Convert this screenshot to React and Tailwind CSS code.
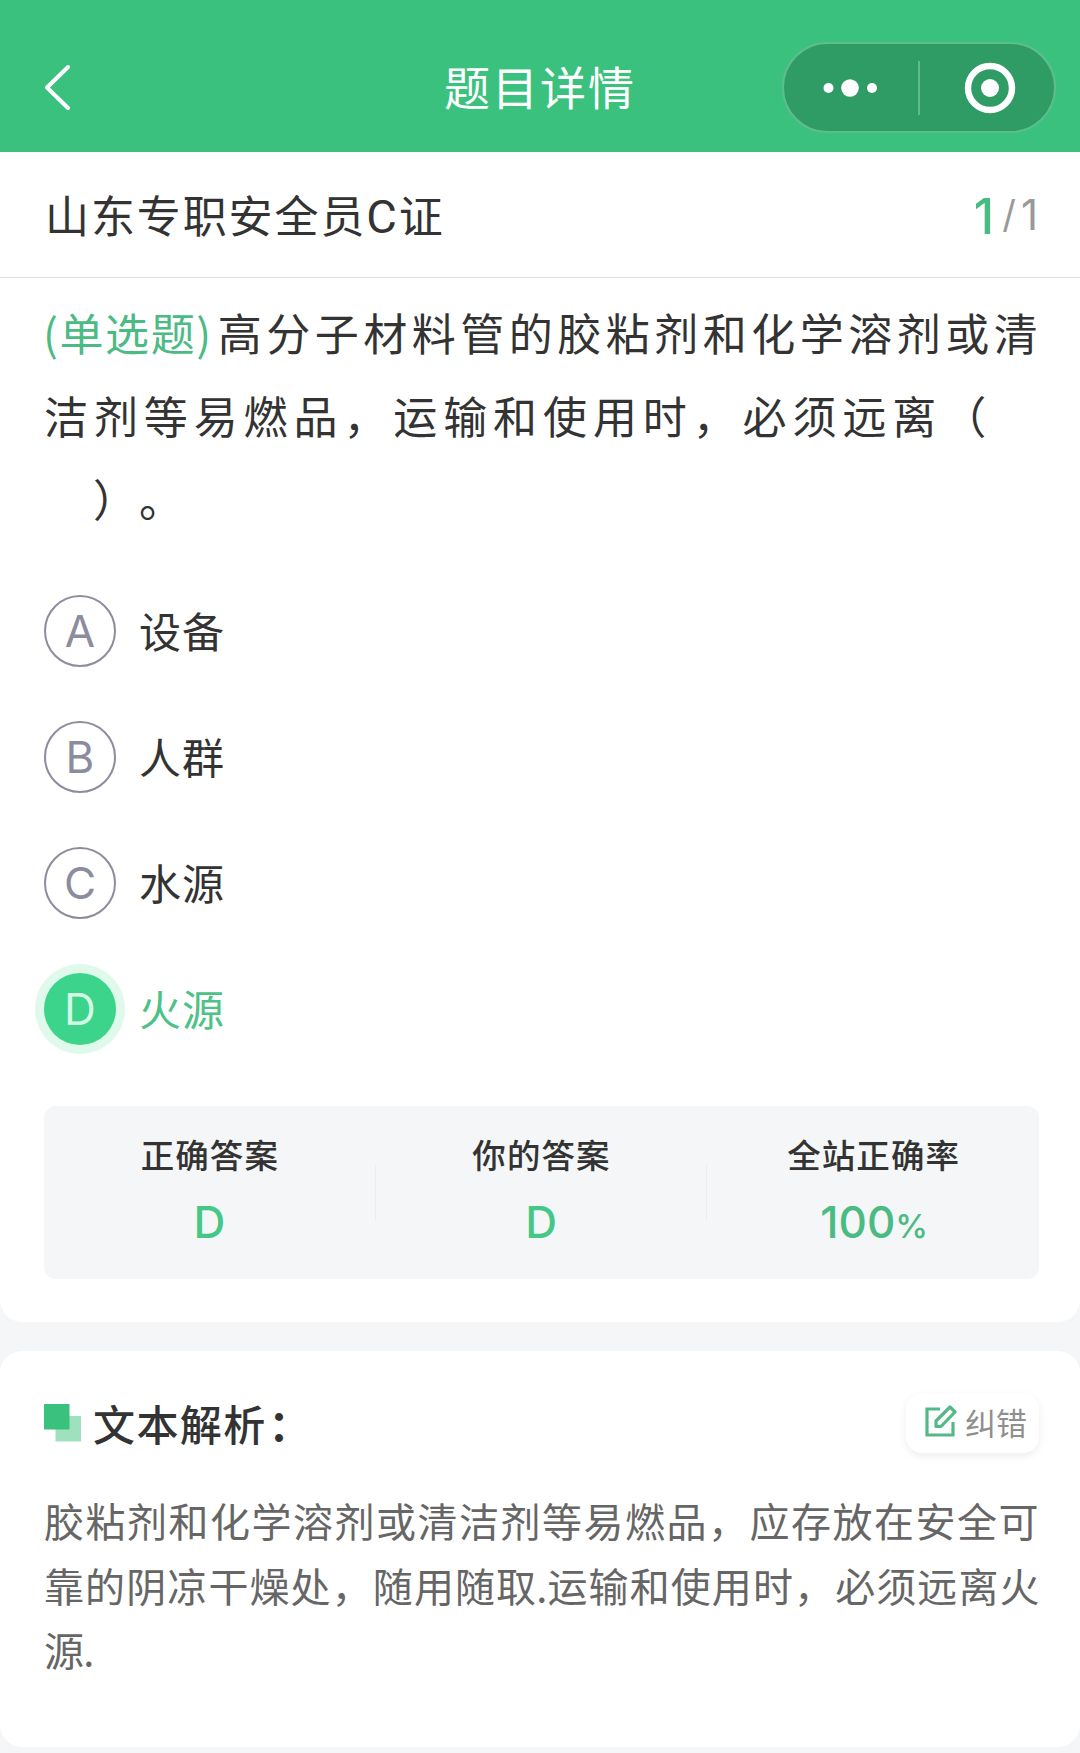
const CJK = "font-['Noto_Sans_CJK_SC',sans-serif] [text-spacing-trim:space-all]";
const LATIN = "font-['Inter','Noto_Sans_CJK_SC',sans-serif]";

function Header() {
  return (
    <header className="grid h-[152px] grid-cols-[1fr_auto_1fr] items-start bg-[#3bc17e] pt-[42px] text-white">
      <button className="flex h-[90px] items-center pl-[43px]" aria-label="返回">
        <svg width="30" height="50" viewBox="0 0 30 50" fill="none" stroke="currentColor" strokeWidth="4" strokeLinecap="round" strokeLinejoin="round">
          <path d="M25 5 L4 25.5 L25 46" />
        </svg>
      </button>
      <h1 className="flex h-[86px] items-center text-[46px] leading-none tracking-[2px] font-normal">题目详情</h1>
      <div className="mr-[24.5px] flex h-[91px] w-[274px] items-center justify-self-end rounded-full border-2 border-[#5fbd8d] bg-[#2f9c66]">
        <svg className="ml-[36px]" width="60" height="24" viewBox="0 0 60 24" fill="white">
          <circle cx="8.5" cy="12" r="5" />
          <circle cx="30" cy="12" r="8.8" />
          <circle cx="52" cy="12" r="5" />
        </svg>
        <div className="ml-[38px] h-[54px] w-[2px] bg-[#5fbd8d]" />
        <svg className="ml-[44px]" width="52" height="52" viewBox="0 0 52 52">
          <circle cx="26" cy="26" r="22" fill="none" stroke="white" strokeWidth="6.4" />
          <circle cx="26" cy="26" r="9" fill="white" />
        </svg>
      </div>
    </header>
  );
}

const options = [
  { key: "A", text: "设备" },
  { key: "B", text: "人群" },
  { key: "C", text: "水源" },
  { key: "D", text: "火源", selected: true },
];

function Option({ item }) {
  const badge = item.selected
    ? "bg-[#3bd48a] text-[#d3fae5] ring-[9px] ring-[#dff9eb]"
    : "border-[2.4px] border-[#8c8c9f] text-[#8c8c9f]";
  return (
    <li className="flex h-[126px] items-center">
      <span className={`mt-[2px] flex size-[72px] items-center justify-center rounded-full text-[44px] leading-none ${LATIN} ${badge}`}>{item.key}</span>
      <span className={`ml-[23px] text-[42px] leading-[60px] tracking-[1px] ${item.selected ? "text-[#4cc287]" : "text-[#333]"}`}>{item.text}</span>
    </li>
  );
}

function Stat({ label, divider, children }) {
  return (
    <div className="flex flex-1 items-center">
      <div className="flex flex-1 flex-col items-center">
        <div className="-mt-[6px] ml-[1px] text-[33.5px] leading-[50px] font-medium tracking-[1.1px] text-[#333]">{label}</div>
        <div className={`mt-[15px] h-[56px] text-[44px] leading-[56px] font-medium text-[#45c887] ${LATIN}`}>{children}</div>
      </div>
      {divider && <div className="h-[57px] w-px bg-[#eceeef]" />}
    </div>
  );
}

function EditIcon() {
  return (
    <svg className="-mt-[4px]" width="34" height="34" viewBox="0 0 34 34" fill="none" stroke="#52b987" strokeWidth="3.2">
      <path d="M16 5 H3 V31 H29 V18" />
      <path d="M12 22.500 V17 L26 3 L31 8 L17 22.500 Z" strokeLinejoin="round" />
    </svg>
  );
}

export default function App() {
  return (
    <div className={`flex h-[1753px] w-[1080px] flex-col overflow-hidden bg-[#f4f6f7] ${CJK}`}>
      <Header />
      <section className="h-[1170px] rounded-b-[22px] bg-white">
        <div className="flex h-[126px] items-center justify-between border-b border-[#dedede] pr-[42px] pl-[45px]">
          <h2 className="mt-[2px] text-[44px] leading-none font-normal tracking-[1.9px] whitespace-nowrap text-[#333]">
            山东专职安全员<span className="font-['Roboto'] text-[47px] leading-none">C</span>证
          </h2>
          <div className={`flex items-center text-[#999] ${LATIN}`}>
            <span className="mt-[3px] text-[49px] leading-none font-medium text-[#4bbb84]">1</span>
            <span className="-mt-[2px] ml-[8px] text-[38px] leading-none">/</span>
            <span className="ml-[5px] text-[42px] leading-none">1</span>
          </div>
        </div>

        <div className="px-[44px] pt-[13px] text-[44px] leading-[83px] text-[#333]">
          <div className="whitespace-nowrap">
            <span className="-ml-[1px] tracking-[1.6px] text-[#4bbb84]">(单选题)</span>
            <span className="ml-[5px] tracking-[4.5px]">高分子材料管的胶粘剂和化学溶剂或清</span>
          </div>
          <div className="tracking-[5.9px] whitespace-nowrap">洁剂等易燃品，运输和使用时，必须远离（</div>
          <div className="pl-[3px] tracking-[2px] whitespace-pre">　）。</div>
        </div>

        <ul className="mt-[27px] pl-[44px]">
          {options.map((o) => (
            <Option key={o.key} item={o} />
          ))}
        </ul>

        <div className="mr-[41px] ml-[44px] mt-[35px] flex h-[173px] rounded-[12px] bg-[#f4f6f7]">
          <Stat label="正确答案" divider>D</Stat>
          <Stat label="你的答案" divider>D</Stat>
          <Stat label="全站正确率">
            <span className="ml-[2px] text-[#4bbb84]">100<span className="text-[33px] font-medium">%</span></span>
          </Stat>
        </div>
      </section>

      <section className="mt-[29px] h-[396px] rounded-[22px] bg-white pt-[42px] pr-[41px] pl-[44px]">
        <div className="flex h-[60px] items-center justify-between">
          <div className="flex items-center">
            <svg width="37" height="38" viewBox="0 0 37 38">
              <rect x="11.500" y="12" width="25.500" height="25.500" fill="#9fe0bf" />
              <rect x="0" y="0" width="25.500" height="25.500" fill="#3bc17e" />
            </svg>
            <h3 className="ml-[12px] text-[42px] leading-[60px] font-medium tracking-[1.4px] text-[#333]">
              文本解析<span className="ml-[2px] font-bold">：</span>
            </h3>
          </div>
          <button className="flex h-[60px] w-[133px] items-center rounded-[16px] bg-white pl-[18px] shadow-[0_3px_8px_rgba(0,0,0,0.07)]">
            <EditIcon />
            <span className="-mt-[4px] ml-[7px] text-[31px] leading-none text-[#8f8f8f]">纠错</span>
          </button>
        </div>
        <div className="mt-[35px] text-[40px] leading-[64.7px] text-[#666]">
          <div className="tracking-[1.5px] whitespace-nowrap">胶粘剂和化学溶剂或清洁剂等易燃品，应存放在安全可</div>
          <div className="tracking-[1.1px] whitespace-nowrap">靠的阴凉干燥处，随用随取<span className="-mr-[1px] -ml-[1px]">.</span>运输和使用时，必须远离火</div>
          <div className="tracking-[1.2px] whitespace-nowrap">源<span className="-ml-[2px]">.</span></div>
        </div>
      </section>
    </div>
  );
}
